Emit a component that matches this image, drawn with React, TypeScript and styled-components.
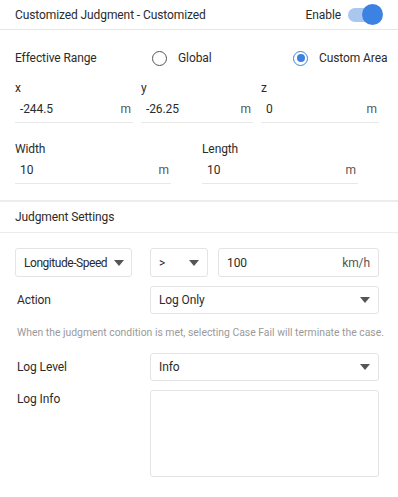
import React from "react";
import styled, { createGlobalStyle } from "styled-components";

const GlobalStyle = createGlobalStyle`
  body {
    margin: 0;
    background: #ffffff;
    font-family: Roboto, "Liberation Sans", sans-serif;
    color: #2b2b2b;
    letter-spacing: -0.1px;
  }
`;

const Panel = styled.div`
  width: 398px;
  height: 497px;
  overflow: hidden;
  background: #fff;
  font-size: 12px;
`;

const Header = styled.div`
  height: 29px;
  display: flex;
  align-items: center;
  justify-content: space-between;
  padding: 0 16px 0 15px;
  border-bottom: 1px solid #e6e6e6;
  font-size: 12px;
`;

const Toggle = styled.div`
  display: flex;
  align-items: center;
  gap: 7px;
`;

const Track = styled.div<{ $on: boolean }>`
  position: relative;
  width: 34px;
  height: 14px;
  border-radius: 7px;
  background: ${(p) => (p.$on ? "#a9c7ef" : "#ccc")};
`;

const Knob = styled.div<{ $on: boolean }>`
  position: absolute;
  top: -4px;
  left: ${(p) => (p.$on ? "14px" : "-2px")};
  width: 21px;
  height: 21px;
  border-radius: 50%;
  background: #3b82e2;
`;

const Section = styled.div`
  padding: 0 15px;
`;

const RangeRow = styled.div`
  height: 28px;
  margin-top: 14px;
  display: grid;
  grid-template-columns: 137px 141px 1fr;
  align-items: center;
  font-size: 12px;
`;

const RadioOption = styled.label`
  display: flex;
  align-items: center;
  gap: 11px;
  white-space: nowrap;
`;

const RadioCircle = styled.span<{ $checked: boolean }>`
  width: 13px;
  height: 13px;
  border-radius: 50%;
  border: 1.5px solid ${(p) => (p.$checked ? "#3b82e2" : "#555")};
  display: flex;
  align-items: center;
  justify-content: center;

  &::after {
    content: "";
    width: 8px;
    height: 8px;
    border-radius: 50%;
    background: ${(p) => (p.$checked ? "#3b82e2" : "transparent")};
  }
`;

const FieldGrid = styled.div<{ $cols: string; $gap: number; $top: number }>`
  display: grid;
  grid-template-columns: ${(p) => p.$cols};
  column-gap: ${(p) => p.$gap}px;
  margin-top: ${(p) => p.$top}px;
`;

const Field = styled.div`
  display: flex;
  flex-direction: column;
`;

const FieldLabel = styled.div`
  font-size: 12px;
  height: 16px;
  line-height: 16px;
`;

const UnitInput = styled.div`
  height: 26px;
  display: flex;
  align-items: center;
  justify-content: space-between;
  padding: 0 2px 0 5px;
  border-bottom: 1px solid #e8e8e8;
  font-size: 12px;
`;

const Unit = styled.span`
  color: #555;
`;

const SectionTitle = styled.div`
  margin-top: 16px;
  height: 30px;
  display: flex;
  align-items: center;
  padding: 0 15px;
  border-top: 2px solid #ececec;
  border-bottom: 1px solid #ececec;
  font-size: 12px;
`;

const Form = styled.div`
  padding: 15px 19px 0 15px;
  display: flex;
  flex-direction: column;
`;

const ConditionRow = styled.div`
  display: flex;
  height: 29px;
`;

const Box = styled.div<{ $w?: number; $ml?: number; $tight?: boolean }>`
  box-sizing: border-box;
  height: 100%;
  ${(p) => (p.$w ? `width: ${p.$w}px;` : "flex: 1;")}
  margin-left: ${(p) => p.$ml || 0}px;
  border: 1px solid #e4e4e4;
  border-radius: 3px;
  display: flex;
  align-items: center;
  justify-content: space-between;
  padding: 0 ${(p) => (p.$tight ? 7 : 8)}px 0 8px;
  font-size: 12px;
  letter-spacing: ${(p) => (p.$tight ? "-0.45px" : "-0.1px")};
  white-space: nowrap;
`;

const Caret = styled.span`
  width: 0;
  height: 0;
  border-left: 5.5px solid transparent;
  border-right: 5.5px solid transparent;
  border-top: 6px solid #555;
`;

const Row = styled.div<{ $top: number; $h: number; $align?: string }>`
  display: grid;
  grid-template-columns: 135px 1fr;
  margin-top: ${(p) => p.$top}px;
  height: ${(p) => p.$h}px;
  align-items: ${(p) => p.$align || "center"};
`;

const RowLabel = styled.div<{ $pt?: number }>`
  font-size: 12px;
  padding-left: 2px;
  padding-top: ${(p) => p.$pt || 0}px;
`;

const TextArea = styled.div`
  box-sizing: border-box;
  height: 100%;
  border: 1px solid #e4e4e4;
  border-radius: 3px;
`;

const Hint = styled.div`
  margin-top: 12px;
  font-size: 10.4px;
  letter-spacing: 0;
  color: #9a9a9a;
  padding-left: 2px;
  white-space: nowrap;
`;

const App: React.FC = () => {
  return (
    <Panel>
      <GlobalStyle />
      <Header>
        <span>Customized Judgment - Customized</span>
        <Toggle>
          <span>Enable</span>
          <Track $on>
            <Knob $on />
          </Track>
        </Toggle>
      </Header>

      <Section>
        <RangeRow>
          <span>Effective Range</span>
          <RadioOption>
            <RadioCircle $checked={false} />
            Global
          </RadioOption>
          <RadioOption>
            <RadioCircle $checked />
            Custom Area
          </RadioOption>
        </RangeRow>

        <FieldGrid $cols="118px 112px 118px" $gap={8} $top={8}>
          {[
            ["x", "-244.5"],
            ["y", "-26.25"],
            ["z", "0"],
          ].map(([label, value]) => (
            <Field key={label}>
              <FieldLabel>{label}</FieldLabel>
              <UnitInput>
                <span>{value}</span>
                <Unit>m</Unit>
              </UnitInput>
            </Field>
          ))}
        </FieldGrid>

        <FieldGrid $cols="156px 156px" $gap={31} $top={18}>
          {["Width", "Length"].map((label) => (
            <Field key={label}>
              <FieldLabel>{label}</FieldLabel>
              <UnitInput>
                <span>10</span>
                <Unit>m</Unit>
              </UnitInput>
            </Field>
          ))}
        </FieldGrid>
      </Section>

      <SectionTitle>Judgment Settings</SectionTitle>

      <Form>
        <ConditionRow>
          <Box $w={117} $tight>
            Longitude-Speed
            <Caret />
          </Box>
          <Box $w={58} $ml={18}>
            &gt;
            <Caret />
          </Box>
          <Box $ml={10}>
            100
            <Unit>km/h</Unit>
          </Box>
        </ConditionRow>

        <Row $top={9} $h={28}>
          <RowLabel>Action</RowLabel>
          <Box>
            Log Only
            <Caret />
          </Box>
        </Row>

        <Hint>
          When the judgment condition is met, selecting Case Fail will terminate
          the case.
        </Hint>

        <Row $top={14} $h={28}>
          <RowLabel>Log Level</RowLabel>
          <Box>
            Info
            <Caret />
          </Box>
        </Row>

        <Row $top={9} $h={87} $align="stretch">
          <RowLabel $pt={2}>Log Info</RowLabel>
          <TextArea />
        </Row>
      </Form>
    </Panel>
  );
};

export default App;
